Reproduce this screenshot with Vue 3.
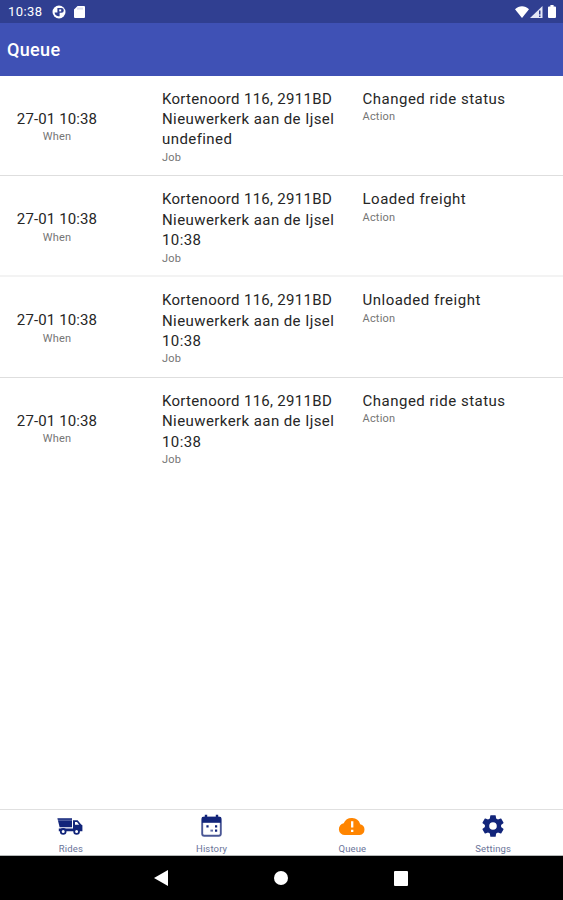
<template>
  <div class="screen">
    <div class="status-bar">
      <span class="clock">10:38</span>
      <svg class="app-dot" viewBox="0 0 14 14">
        <circle cx="7" cy="7" r="6.5" fill="#fff" />
        <path d="M5.4 3h4a2.4 2.4 0 0 1 0 4.8H7.6v3.4H6.2a4 4 0 0 1-3.6-3.6h2.8z" fill="#303f91" />
        <path d="M7.2 4.4h2v2h-2z" fill="#fff" />
      </svg>
      <svg class="sd-card" viewBox="0 0 11 12">
        <path d="M3.6 0H10q1 0 1 1v10q0 1-1 1H1q-1 0-1-1V3.6z" fill="#fff" />
        <path d="M4 1.6v2M6 1.6v2M8 1.6v2" stroke="#a9b0dc" stroke-width=".8" />
      </svg>
      <div class="system-icons">
        <svg width="14" height="12" viewBox="0 0 14 12">
          <path d="M7 12 0 3.2C4-.9 10-.9 14 3.2z" fill="#fff" />
        </svg>
        <svg width="13" height="12" viewBox="0 0 13 12">
          <path d="M0 12 12.5 0v12z" fill="#e4e7f6" />
          <path d="M9 4.6h1.5v4H9zM9 9.6h1.5V11H9z" fill="#303f91" />
        </svg>
        <svg class="battery" width="8" height="13" viewBox="0 0 8 13">
          <path d="M2.4 0h3.2v1.4H7q1 0 1 1V12q0 1-1 1H1q-1 0-1-1V2.4q0-1 1-1h1.4z" fill="#fff" />
        </svg>
      </div>
    </div>

    <header class="toolbar">
      <h1>Queue</h1>
    </header>

    <main class="queue">
      <div v-for="(item, index) in items" :key="index" class="queue-item">
        <div class="col when">
          <p>27-01 10:38</p>
          <small>When</small>
        </div>
        <div class="col job">
          <p class="street">Kortenoord 116, 2911BD</p>
          <p>Nieuwerkerk aan de Ijsel</p>
          <p>{{ item.time }}</p>
          <small>Job</small>
        </div>
        <div class="col action">
          <p>{{ item.action }}</p>
          <small>Action</small>
        </div>
      </div>
    </main>

    <nav class="tabs">
      <a class="tab">
        <svg width="26" height="26" viewBox="0 0 26 26">
          <path d="M.4 5.2H15v9H2.6z" fill="#12257a" />
          <path d="M1 7.2h14" stroke="#8e9ac6" stroke-width=".7" />
          <path d="M16 7.2h4.6l3.6 4.2 1.2.8v6H1.8v-2.8H16z" fill="#12257a" />
          <path d="M18 9h2l2.2 2.8H18z" fill="#fff" />
          <g fill="#fff" stroke="#12257a" stroke-width="1.8">
            <circle cx="6.2" cy="18.4" r="2.4" />
            <circle cx="19.6" cy="18.4" r="2.4" />
          </g>
        </svg>
        <span>Rides</span>
      </a>
      <a class="tab">
        <svg width="26" height="26" viewBox="0 0 26 26">
          <rect x="4.2" y="4.4" width="18.6" height="18.4" rx="2" fill="#fff" stroke="#4a5795" stroke-width="1.9" />
          <path d="M4 4h19v5.8H4z" fill="#12257a" />
          <path d="M8 1.8v4M19 1.8v4" stroke="#12257a" stroke-width="2.4" />
          <g fill="#12257a">
            <path d="M8.4 12.2h2.2v2.2H8.4zM17 12.2h2.2v2.2H17zM17 16.6h2.2v2.2H17z" />
            <path d="M12.4 16.6h2.6v2h-2.6z" opacity=".65" />
          </g>
        </svg>
        <span>History</span>
      </a>
      <a class="tab">
        <svg width="28" height="26" viewBox="0 0 28 26">
          <path d="M6.8 22A5.9 5.9 0 0 1 5.7 10.3 8.8 8.8 0 0 1 22.2 11.2a5.5 5.5 0 0 1-.4 10.8z" fill="#ff8500" />
          <path d="M14.2 8.2v6.4M14.2 16.8V19" stroke="#fff" stroke-width="2.3" />
        </svg>
        <span>Queue</span>
      </a>
      <a class="tab">
        <svg width="26" height="26" viewBox="0 0 24 24">
          <path
            fill="#12257a"
            d="M12 15.5A3.5 3.5 0 0 1 8.5 12 3.5 3.5 0 0 1 12 8.5a3.5 3.5 0 0 1 3.5 3.5 3.5 3.5 0 0 1-3.5 3.5m7.43-2.53c.04-.32.07-.64.07-.97s-.03-.66-.07-1l2.11-1.63c.19-.15.24-.42.12-.64l-2-3.46c-.12-.22-.39-.31-.61-.22l-2.49 1c-.52-.39-1.06-.73-1.69-.98l-.37-2.65A.506.506 0 0 0 14 2h-4c-.25 0-.46.18-.5.42l-.37 2.65c-.63.25-1.17.59-1.69.98l-2.49-1c-.22-.09-.49 0-.61.22l-2 3.46c-.13.22-.07.49.12.64L4.57 11c-.04.34-.07.67-.07 1s.03.65.07.97l-2.11 1.66c-.19.15-.25.42-.12.64l2 3.46c.12.22.39.3.61.22l2.49-1.01c.52.4 1.06.74 1.69.99l.37 2.65c.04.24.25.42.5.42h4c.25 0 .46-.18.5-.42l.37-2.65c.63-.26 1.17-.59 1.69-.99l2.49 1.01c.22.08.49 0 .61-.22l2-3.46c.12-.22.07-.49-.12-.64z"
          />
        </svg>
        <span>Settings</span>
      </a>
    </nav>

    <div class="system-nav">
      <svg width="14" height="16" viewBox="0 0 14 16"><path d="M0 8 14 0v16z" fill="#fff" /></svg>
      <svg width="14" height="14" viewBox="0 0 14 14"><circle cx="7" cy="7" r="7" fill="#fff" /></svg>
      <svg width="14" height="15" viewBox="0 0 14 15"><rect width="14" height="15" rx="1" fill="#fff" /></svg>
    </div>
  </div>
</template>

<script setup>
import { ref } from 'vue'

const items = ref([
  { time: 'undefined', action: 'Changed ride status' },
  { time: '10:38', action: 'Loaded freight' },
  { time: '10:38', action: 'Unloaded freight' },
  { time: '10:38', action: 'Changed ride status' }
])
</script>

<style>
body {
  margin: 0;
}
</style>

<style scoped>
.screen {
  display: flex;
  flex-direction: column;
  width: 563px;
  height: 900px;
  overflow: hidden;
  background: #fff;
  color: #262626;
  font-family: Roboto, sans-serif;
}

.status-bar {
  display: flex;
  align-items: center;
  box-sizing: border-box;
  height: 23px;
  padding: 0 7px 0 8px;
  background: #303f91;
  color: #fff;
}

.clock {
  width: 44px;
  font-size: 13px;
  letter-spacing: 0.4px;
}

.app-dot {
  width: 14px;
  height: 14px;
}

.sd-card {
  width: 11px;
  height: 12px;
  margin-left: 8px;
}

.system-icons {
  display: flex;
  align-items: center;
  gap: 1px;
  margin-left: auto;
}

.battery {
  margin-left: 4px;
}

.toolbar {
  display: flex;
  align-items: center;
  height: 52.5px;
  padding: 0 7px;
  background: #3f51b5;
}

.toolbar h1 {
  margin: 0;
  color: #fff;
  font-size: 18px;
  font-weight: 500;
  letter-spacing: 0.35px;
}

.queue {
  flex: 1;
}

.queue-item {
  display: grid;
  grid-template-columns: 114px 200px 1fr;
  box-sizing: border-box;
  height: 100.8px;
  padding-top: 13px;
  border-bottom: 1px solid #dedede;
}

.queue-item:nth-child(2) {
  border-bottom: 2px solid #f3f3f3;
}

.queue-item:last-child {
  border-bottom: none;
}

.col p {
  margin: 0;
  font-size: 15px;
  line-height: 20.4px;
  letter-spacing: 0.42px;
  white-space: nowrap;
}

.col small {
  display: block;
  padding-top: 1px;
  color: #757575;
  font-size: 11px;
  line-height: 14px;
  letter-spacing: 0.2px;
}

.when {
  padding-top: 20px;
  text-align: center;
}

.col.when p {
  letter-spacing: 0.12px;
}

.job {
  padding-left: 48px;
}

.job .street {
  letter-spacing: 0.3px;
}

.action {
  padding-left: 48.5px;
}

.col.action p {
  letter-spacing: 0.5px;
}

.tabs {
  display: flex;
  box-sizing: border-box;
  height: 47px;
  border-top: 1px solid #e0e0e0;
  border-bottom: 1px solid #b4b8b8;
}

.tab {
  display: flex;
  flex: 1;
  flex-direction: column;
  align-items: center;
  padding-top: 3px;
}

.tab span {
  margin-top: 3px;
  padding-left: 1px;
  color: #6b7499;
  font-size: 9.5px;
  line-height: 13px;
  letter-spacing: 0.15px;
}

.system-nav {
  display: flex;
  align-items: center;
  justify-content: center;
  gap: 106px;
  height: 44px;
  padding-right: 1px;
  background: #000;
}
</style>
